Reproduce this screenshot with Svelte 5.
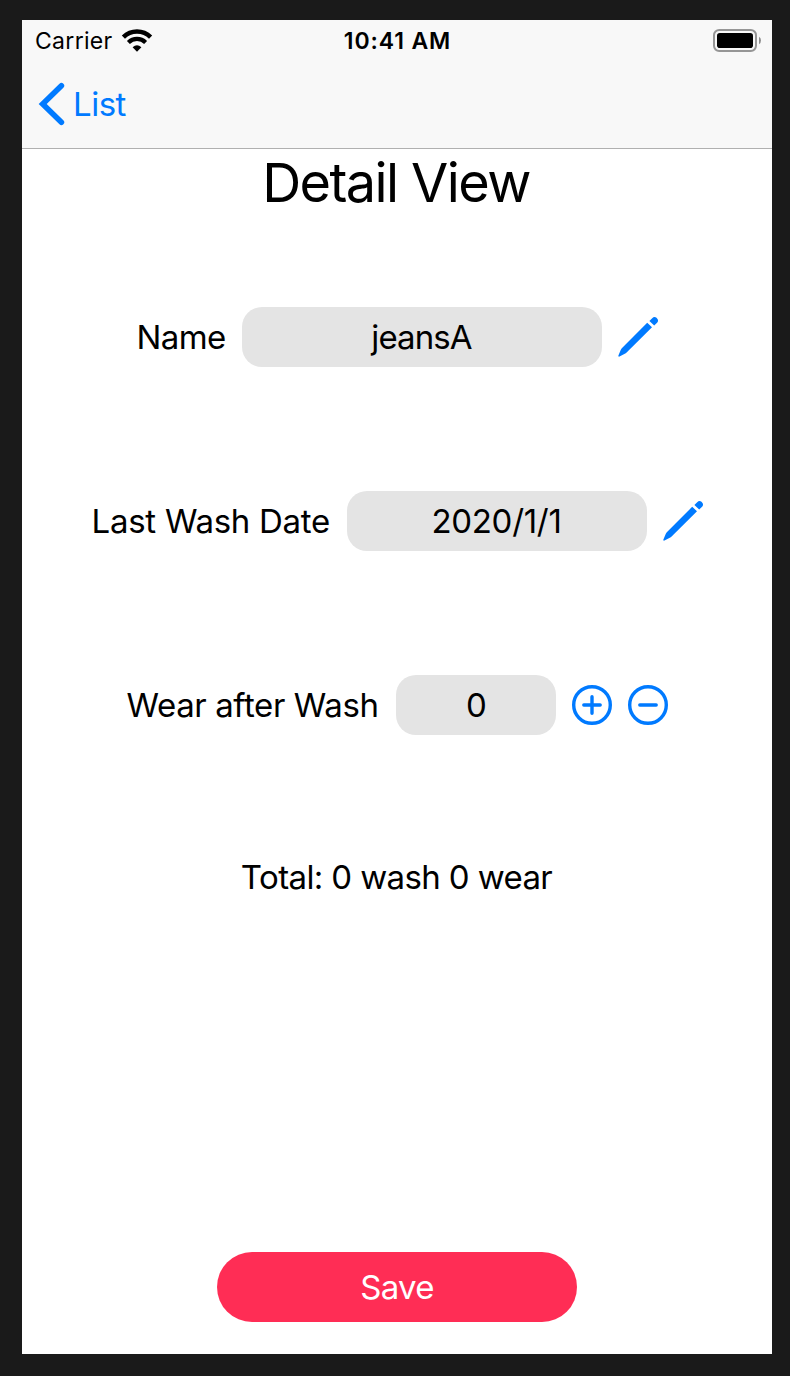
<script>
  let name = $state('jeansA');
  let date = $state('2020/1/1');
  let wear = $state(0);
  let washTotal = $state(0);
  let wearTotal = $state(0);
</script>

{#snippet pencil()}
  <svg width="40" height="40" viewBox="0 0 40 40" fill="#007aff" aria-hidden="true">
    <path d="M29.2 5.8 34 10.2 8.6 35.5Q7.8 36.2 6.8 36.7L1.5 39.6Q.1 40.1.4 38.6L2.6 33.2Q3 32 3.8 31.2Z" />
    <path d="M31.4 4 34.2 1.2Q36.3 -.9 38.5 .8L39.1 1.4Q41 3.6 39.1 5.7L36.2 8.5Z" />
  </svg>
{/snippet}

<div class="stage">
  <main class="phone">
    <header>
      <div class="status">
        <div class="carrier">
          <span class="carrier-name">Carrier</span>
          <svg width="30" height="22" viewBox="0 0 30 22" aria-hidden="true">
            <path d="M1.4 7.1A19.4 19.4 0 0 1 28.6 7.1" fill="none" stroke="#000" stroke-width="4.5" />
            <path d="M6.4 12.5A12.2 12.2 0 0 1 23.6 12.5" fill="none" stroke="#000" stroke-width="4.2" />
            <path d="M10.6 17.3Q15 13.4 19.4 17.3L15 21.7Z" />
          </svg>
        </div>
        <div class="time">10:41 AM</div>
        <svg class="battery" width="49" height="24" viewBox="0 0 49 24" aria-hidden="true">
          <rect x="1" y="1" width="42" height="21" rx="5.2" fill="none" stroke="#969696" stroke-width="2" />
          <rect x="4" y="4" width="36" height="15" rx="2.8" />
          <path d="M46 7.8Q48 9 48 11.5T46 15.2Z" fill="#8e8e8e" />
        </svg>
      </div>
      <nav>
        <svg width="26" height="42" viewBox="0 0 26 42" aria-hidden="true">
          <path d="M22.4 2.8 3.7 21 22.4 39.2" fill="none" stroke="#007aff" stroke-width="5.6" stroke-linecap="round" stroke-linejoin="miter" />
        </svg>
        <span class="back">List</span>
      </nav>
    </header>

    <h1>Detail View</h1>

    <div class="rows">
      <div class="row">
        <span class="label name">Name</span>
        <div class="field wide"><span class="name-value">{name}</span></div>
        {@render pencil()}
      </div>
      <div class="row">
        <span class="label date">Last Wash Date</span>
        <div class="field medium"><span class="date-value">{date}</span></div>
        {@render pencil()}
      </div>
      <div class="row">
        <span class="label wear">Wear after Wash</span>
        <div class="field small">{wear}</div>
        <svg width="40" height="40" viewBox="0 0 40 40" fill="none" stroke="#007aff" stroke-width="3.4" stroke-linecap="round" aria-hidden="true">
          <circle cx="20" cy="20" r="18.3" />
          <path d="M11.8 20H28.2M20 11.8V28.2" />
        </svg>
        <svg width="40" height="40" viewBox="0 0 40 40" fill="none" stroke="#007aff" stroke-width="3.4" stroke-linecap="round" aria-hidden="true">
          <circle cx="20" cy="20" r="18.3" />
          <path d="M11.8 20H28.2" />
        </svg>
      </div>
    </div>

    <p class="total">Total: {washTotal} wash {wearTotal} wear</p>

    <button type="button"><span>Save</span></button>
  </main>
</div>

<style>
  :global(body) {
    background: #1a1a1a;
  }
  .stage {
    box-sizing: border-box;
    height: 1376px;
    padding: 20px 18px 22px 22px;
    background: #1a1a1a;
    font-family: Inter, 'Liberation Sans', sans-serif;
    font-size: 33px;
    line-height: 40px;
    color: #000;
    white-space: nowrap;
  }
  .phone {
    display: flex;
    flex-direction: column;
    align-items: center;
    box-sizing: border-box;
    width: 750px;
    height: 1334px;
    padding-bottom: 32px;
    background: #fff;
  }
  svg {
    display: block;
    flex: none;
    overflow: visible;
  }
  header {
    box-sizing: border-box;
    width: 100%;
    height: 129px;
    background: #f8f8f8;
    border-bottom: 1px solid #b0b0b0;
  }
  .status {
    display: grid;
    grid-template-columns: 1fr auto 1fr;
    align-items: center;
    height: 40px;
    padding: 0 11px 0 13px;
    font-size: 23px;
  }
  .carrier {
    display: flex;
    align-items: center;
  }
  .carrier-name {
    width: 86.5px;
    letter-spacing: 0.3px;
  }
  .time {
    font-weight: 600;
    letter-spacing: 0.9px;
    padding: 1px 1px 0 0;
  }
  .battery {
    justify-self: end;
    margin-right: -1px;
  }
  nav {
    display: flex;
    align-items: center;
    gap: 8px;
    height: 88px;
    padding-left: 17px;
    color: #007aff;
    letter-spacing: -0.5px;
  }
  h1 {
    margin: 0;
    height: 67px;
    padding-right: 2px;
    font-size: 54px;
    font-weight: 400;
    line-height: 67px;
    letter-spacing: -1.6px;
  }
  .rows {
    display: flex;
    flex-direction: column;
    align-items: center;
    gap: 124px;
    padding-top: 91px;
  }
  .row {
    display: flex;
    align-items: center;
    gap: 16px;
    height: 60px;
  }
  .label {
    box-sizing: border-box;
    padding-left: 0.6px;
  }
  .label.name {
    width: 90px;
    letter-spacing: -0.6px;
  }
  .label.date {
    width: 240px;
    letter-spacing: -0.28px;
  }
  .label.wear {
    width: 254px;
    letter-spacing: -0.4px;
  }
  .field {
    display: flex;
    align-items: center;
    justify-content: center;
    box-sizing: border-box;
    height: 60px;
    border-radius: 20px;
    background: #e4e4e4;
  }
  .wide {
    width: 360px;
    padding-right: 1px;
    letter-spacing: -0.9px;
  }
  .medium {
    width: 300px;
    padding-right: 1px;
    letter-spacing: -0.3px;
  }
  .small {
    width: 160px;
    padding-left: 1px;
  }
  .total {
    margin: 122px 0 0;
    padding-right: 1px;
    letter-spacing: -0.62px;
  }
  button {
    width: 360px;
    height: 70px;
    margin-top: auto;
    padding: 0;
    border: 0;
    border-radius: 35px;
    background: #ff2d55;
    color: #fff;
    font: inherit;
    letter-spacing: -0.7px;
  }
</style>
